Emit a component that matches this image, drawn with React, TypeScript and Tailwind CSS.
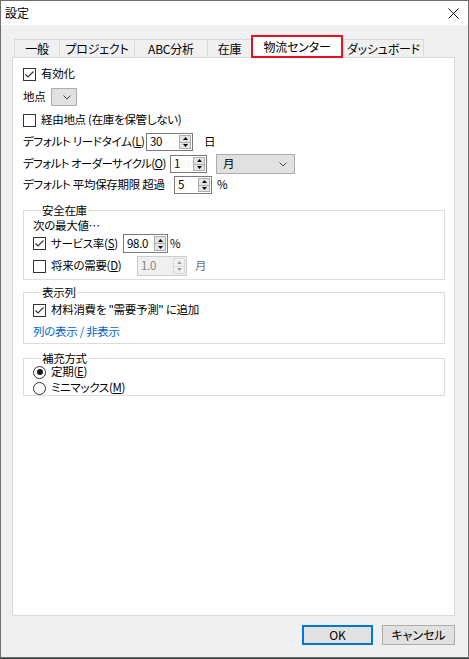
import React from "react";

const font = "[font-family:'Noto_Sans_CJK_JP',sans-serif] [font-feature-settings:'palt']";

const CheckBox = ({ checked = false }: { checked?: boolean }) => (
  <span className="w-[13px] h-[13px] border border-[#333333] bg-white flex items-center justify-center shrink-0">
    {checked && (
      <svg width="11" height="11" viewBox="0 0 11 11">
        <polyline points="1.5,5.5 4,8 9.5,2.5" fill="none" stroke="#333333" strokeWidth="1.2" />
      </svg>
    )}
  </span>
);

const Radio = ({ checked = false }: { checked?: boolean }) => (
  <span className="w-[13px] h-[13px] rounded-full border border-[#333333] bg-white flex items-center justify-center shrink-0">
    {checked && <span className="w-[6px] h-[6px] rounded-full bg-[#1a1a1a]" />}
  </span>
);

const Tri = ({ up, color }: { up: boolean; color: string }) => (
  <svg width="5" height="3" viewBox="0 0 5 3">
    <polygon points={up ? "0,3 5,3 2.5,0" : "0,0 5,0 2.5,3"} fill={color} />
  </svg>
);

const Spinner = ({
  value,
  className,
  disabled = false,
}: {
  value: string;
  className: string;
  disabled?: boolean;
}) => (
  <div
    className={`${className} shrink-0 flex border ${
      disabled ? "border-[#cccccc] bg-[#f0f0f0] text-[#838383]" : "border-[#7a7a7a] bg-white text-black"
    }`}
  >
    <span className="flex-1 pl-[3px] flex items-center leading-none">{value}</span>
    <div
      className={`w-[12px] my-[1px] mr-[1px] flex flex-col border ${
        disabled ? "border-[#d9d9d9] bg-[#f0f0f0]" : "border-[#adadad] bg-[#e5e5e5]"
      }`}
    >
      <div className="flex-1 flex items-center justify-center">
        <Tri up color={disabled ? "#a0a0a0" : "#000"} />
      </div>
      <div className={`h-px ${disabled ? "bg-[#d9d9d9]" : "bg-[#adadad]"}`} />
      <div className="flex-1 flex items-center justify-center">
        <Tri up={false} color={disabled ? "#a0a0a0" : "#000"} />
      </div>
    </div>
  </div>
);

const Chevron = () => (
  <svg width="8" height="5" viewBox="0 0 8 5">
    <polyline points="0.5,0.5 4,4 7.5,0.5" fill="none" stroke="#444" strokeWidth="1" />
  </svg>
);

const tabs = [
  { label: "一般", w: "w-[45px]" },
  { label: "プロジェクト", w: "w-[75px]" },
  { label: "ABC分析", w: "w-[73px]" },
  { label: "在庫", w: "w-[44px]" },
  { label: "物流センター", w: "w-[92px]", active: true },
  { label: "ダッシュボード", w: "w-[81px]" },
];

export default function App() {
  return (
    <div className={`w-[469px] h-[659px] bg-[#3b3f45] text-[12px] text-black whitespace-nowrap ${font}`}>
      <div className="w-[469px] h-[658px] border border-[#6f6f6f] bg-[#f0f0f0] flex flex-col">
        {/* Title bar */}
        <div className="h-[24px] bg-white flex items-center justify-between pl-[4px] pr-[9px]">
          <span>設定</span>
          <svg width="11" height="11" viewBox="0 0 11 11">
            <path d="M0.5 0.5L10.5 10.5M10.5 0.5L0.5 10.5" stroke="#111" strokeWidth="1" />
          </svg>
        </div>

        <div className="flex-1 flex flex-col pt-[10px] pl-[11px] pr-[13px]">
          {/* Tabs */}
          <div className="h-[22px] flex items-end pl-[2px] tracking-[-0.2px]">
            {tabs.map((t, i) =>
              t.active ? (
                <div
                  key={t.label}
                  className={`${t.w} h-[23px] -mb-px relative z-10 bg-white border-2 border-[#e81123] flex items-center justify-center`}
                >
                  {t.label}
                </div>
              ) : (
                <div
                  key={t.label}
                  className={`${t.w} h-[18px] border-t border-l border-[#d9d9d9] ${
                    i === tabs.length - 1 ? "border-r" : ""
                  } flex items-center justify-center`}
                >
                  {t.label}
                </div>
              )
            )}
          </div>

          {/* Panel */}
          <div className="h-[559px] bg-white border border-[#d9d9d9] flex flex-col pt-[8px] pl-[10px] pr-[9px] text-[11.5px] tracking-[-0.3px]">
            <div className="h-[16px] flex items-center gap-[5px]">
              <CheckBox checked />
              <span>有効化</span>
            </div>
            <div className="mt-[6px] h-[18px] flex items-center">
              <span className="w-[28px] shrink-0">地点</span>
              <div className="w-[26px] h-[18px] bg-[#e1e1e1] border border-[#adadad] flex items-center justify-end pr-[5px]">
                <Chevron />
              </div>
            </div>
            <div className="mt-[6px] h-[16px] flex items-center gap-[5px]">
              <CheckBox />
              <span>経由地点 (在庫を保管しない)</span>
            </div>
            <div className="mt-[5px] h-[18px] flex items-center">
              <span className="w-[123px] shrink-0">
                デフォルト リードタイム(<u>L</u>)
              </span>
              <Spinner value="30" className="w-[47px] h-[18px]" />
              <span className="ml-[11px]">日</span>
            </div>
            <div className="mt-[3px] h-[20px] flex items-center">
              <span className="w-[147px] shrink-0 tracking-[-0.6px]">
                デフォルト オーダーサイクル(<u>O</u>)
              </span>
              <Spinner value="1" className="w-[37px] h-[18px]" />
              <div className="ml-[9px] w-[79px] h-[20px] bg-[#e1e1e1] border border-[#adadad] flex items-center justify-between pl-[6px] pr-[7px]">
                <span>月</span>
                <Chevron />
              </div>
            </div>
            <div className="mt-[2px] h-[18px] flex items-center">
              <span className="w-[151px] shrink-0">デフォルト 平均保存期限 超過</span>
              <Spinner value="5" className="w-[38px] h-[18px]" />
              <span className="ml-[5px]">%</span>
            </div>

            {/* 安全在庫 */}
            <fieldset className="mt-[10px] border border-[#dcdcdc] pl-[9px] pb-[3px]">
              <legend className="ml-[8px] px-[1px] h-[12px] leading-[12px]">安全在庫</legend>
              <div className="mt-[2px] h-[16px] flex items-center">次の最大値…</div>
              <div className="h-[19px] flex items-center">
                <div className="w-[90px] shrink-0 flex items-center gap-[5px]">
                  <CheckBox checked />
                  <span>
                    サービス率(<u>S</u>)
                  </span>
                </div>
                <Spinner value="98.0" className="w-[45px] h-[19px]" />
                <span className="ml-[2px]">%</span>
              </div>
              <div className="mt-[3px] h-[20px] flex items-center">
                <div className="w-[104px] shrink-0 flex items-center gap-[5px]">
                  <CheckBox />
                  <span>
                    将来の需要(<u>D</u>)
                  </span>
                </div>
                <Spinner value="1.0" className="w-[50px] h-[20px]" disabled />
                <span className="ml-[8px] text-[#6d6d6d]">月</span>
              </div>
            </fieldset>

            {/* 表示列 */}
            <fieldset className="mt-[6px] border border-[#dcdcdc] pl-[9px] pb-[3px]">
              <legend className="ml-[8px] px-[1px] h-[12px] leading-[12px]">表示列</legend>
              <div className="mt-[4px] h-[16px] flex items-center gap-[5px]">
                <CheckBox checked />
                <span>材料消費を "需要予測" に追加</span>
              </div>
              <div className="mt-[6px] h-[16px] flex items-center text-[#0066cc]">列の表示 / 非表示</div>
            </fieldset>

            {/* 補充方式 */}
            <fieldset className="mt-[8px] border border-[#dcdcdc] pl-[9px]">
              <legend className="ml-[8px] px-[1px] h-[12px] leading-[12px]">補充方式</legend>
              <div className="mt-[1px] h-[14px] flex items-center gap-[5px]">
                <Radio checked />
                <span>
                  定期(<u>E</u>)
                </span>
              </div>
              <div className="mt-[2px] h-[14px] flex items-center gap-[5px]">
                <Radio />
                <span>
                  ミニマックス(<u>M</u>)
                </span>
              </div>
            </fieldset>
          </div>

          {/* Buttons */}
          <div className="mt-[9px] flex justify-end gap-[9px]">
            <button className="w-[71px] h-[20px] bg-[#e1e1e1] border-2 border-[#0078d7] flex items-center justify-center">
              OK
            </button>
            <button className="w-[73px] h-[20px] bg-[#e1e1e1] border border-[#adadad] flex items-center justify-center">
              キャンセル
            </button>
          </div>
        </div>
      </div>
    </div>
  );
}
